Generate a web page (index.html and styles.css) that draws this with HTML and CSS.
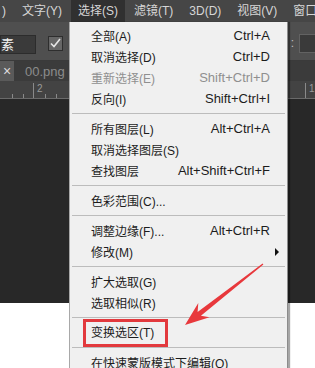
FILE: index.html
```html
<!DOCTYPE html>
<html lang="zh-CN">
<head>
    <meta charset="UTF-8">
    <meta name="viewport" content="width=device-width, initial-scale=1.0">
    <title>选择菜单</title>
    <link rel="stylesheet" href="styles.css">
</head>
<body>
    <div class="screen">
        <div class="menubar">
            <span class="menubar-item first">)</span>
            <span class="menubar-item">文字(Y)</span>
            <span class="menubar-item active">选择(S)</span>
            <span class="menubar-item">滤镜(T)</span>
            <span class="menubar-item">3D(D)</span>
            <span class="menubar-item">视图(V)</span>
            <span class="menubar-item">窗口</span>
        </div>

        <div class="options">
            <div class="options-left">
                <span class="field">素</span>
                <span class="checkbox">
                    <svg width="11" height="10" viewBox="0 0 11 10"><path d="M1 5.5 L4 8.5 L10 1" fill="none" stroke="#e6e6e6" stroke-width="1.6"/></svg>
                </span>
            </div>
            <div class="options-right">
                <span class="colon">:</span>
                <span class="field small"></span>
            </div>
        </div>

        <div class="tabs">
            <span class="tab-close">×</span>
            <span class="tab-title">00.png @</span>
        </div>

        <svg class="ruler" width="315" height="18" viewBox="0 0 315 18">
            <rect width="315" height="18" fill="#434343"/>
            <g stroke="#8a8a8a" stroke-width="1">
                <line x1="12.5" y1="13" x2="12.5" y2="18"/>
                <line x1="23.5" y1="13" x2="23.5" y2="18"/>
                <line x1="33.5" y1="2" x2="33.5" y2="18"/>
                <line x1="45.5" y1="13" x2="45.5" y2="18"/>
                <line x1="56.5" y1="13" x2="56.5" y2="18"/>
                <line x1="305.5" y1="2" x2="305.5" y2="18"/>
            </g>
            <text x="37" y="11" class="ruler-num">2</text>
            <text x="309" y="11" class="ruler-num">1</text>
            <line x1="0" y1="17.5" x2="315" y2="17.5" stroke="#6a6a6a"/>
        </svg>

        <div class="canvas"></div>
        <div class="paper"></div>

        <div class="dropdown">
            <div class="item"><span>全部(A)</span><span class="key">Ctrl+A</span></div>
            <div class="item"><span>取消选择(D)</span><span class="key">Ctrl+D</span></div>
            <div class="item disabled"><span>重新选择(E)</span><span class="key">Shift+Ctrl+D</span></div>
            <div class="item"><span>反向(I)</span><span class="key">Shift+Ctrl+I</span></div>
            <div class="sep"></div>
            <div class="item"><span>所有图层(L)</span><span class="key">Alt+Ctrl+A</span></div>
            <div class="item"><span>取消选择图层(S)</span></div>
            <div class="item"><span>查找图层</span><span class="key">Alt+Shift+Ctrl+F</span></div>
            <div class="sep"></div>
            <div class="item"><span>色彩范围(C)...</span></div>
            <div class="sep"></div>
            <div class="item"><span>调整边缘(F)...</span><span class="key">Alt+Ctrl+R</span></div>
            <div class="item"><span>修改(M)</span><span class="submenu"></span></div>
            <div class="sep"></div>
            <div class="item"><span>扩大选取(G)</span></div>
            <div class="item"><span>选取相似(R)</span></div>
            <div class="sep"></div>
            <div class="item"><span class="mark">变换选区(T)</span></div>
            <div class="sep"></div>
            <div class="item"><span>在快速蒙版模式下编辑(Q)</span></div>
        </div>

        <svg class="arrow" width="315" height="368" viewBox="0 0 315 368">
            <polygon fill="#e8383c" points="185,325 209.5,317.3 200.9,315.8 263.4,264.6 262.6,263.4 197.6,312 198.3,303.1"/>
        </svg>
    </div>
</body>
</html>
```

FILE: styles.css
```css
body {
    margin: 0;
    padding: 0;
    background: #fff;
    font-family: "Liberation Sans", "Noto Sans CJK SC", sans-serif;
}
.screen {
    position: relative;
    width: 315px;
    height: 368px;
    overflow: hidden;
    display: flex;
    flex-direction: column;
}

/* top menu bar */
.menubar {
    display: flex;
    height: 22px;
    background: #464646;
    flex-shrink: 0;
}
.menubar-item {
    padding: 0 7px;
    margin: 0 1px;
    line-height: 22px;
    font-size: 12px;
    color: #d6d6d6;
    white-space: nowrap;
}
.menubar-item.first { margin-left: -5px; }
.menubar-item.active { background: #303030; }

/* tool options bar */
.options {
    display: flex;
    justify-content: space-between;
    align-items: center;
    height: 38px;
    background: #4f4f4f;
    flex-shrink: 0;
    border-bottom: 1px solid #3a3a3a;
}
.options-left, .options-right {
    display: flex;
    align-items: center;
}
.field {
    width: 34px;
    height: 17px;
    background: #3a3a3a;
    border: 1px solid #2c2c2c;
    color: #f2f2f2;
    font-size: 13px;
    line-height: 17px;
    margin-top: 6px;
}
.field.small {
    width: 15px;
    border-color: #626262;
    border-right: none;
    margin-top: 4px;
}
.checkbox {
    display: flex;
    align-items: center;
    justify-content: center;
    width: 13px;
    height: 13px;
    margin: 4px 0 0 12px;
    background: #666;
    border: 1px solid #2e2e2e;
}
.colon {
    color: #bdbdbd;
    font-size: 12px;
    margin: 4px 5px 0 0;
}

/* document tabs */
.tabs {
    display: flex;
    align-items: center;
    height: 20px;
    background: #3b3b3b;
    flex-shrink: 0;
}
.tab-close {
    width: 14px;
    height: 20px;
    background: #5a5a5a;
    color: #dcdcdc;
    font-size: 14px;
    line-height: 20px;
    text-align: center;
}
.tab-title {
    margin-left: 11px;
    color: #8c8c8c;
    font-size: 13px;
}

.ruler {
    display: block;
    flex-shrink: 0;
}
.ruler-num {
    font-family: "Liberation Sans", sans-serif;
    font-size: 10px;
    fill: #9a9a9a;
}
.canvas {
    height: 204px;
    background: #282828;
    flex-shrink: 0;
}
.paper {
    flex: 1;
    background: #fff;
}

/* dropdown menu */
.dropdown {
    position: absolute;
    top: 22px;
    left: 69px;
    width: 217px;
    height: 360px;
    padding-top: 3px;
    background: #f0f0f0;
    border-left: 1px solid #a8a8a8;
    border-right: 1px solid #8c8c8c;
    box-shadow: 2px 0 1px rgba(0, 0, 0, 0.35);
}
.item {
    display: flex;
    justify-content: space-between;
    align-items: center;
    height: 21px;
    padding: 0 17px 0 21px;
    font-size: 12px;
    color: #1c1c1c;
    white-space: nowrap;
}
.item.disabled { color: #8f8f8f; }
.key { font-size: 13px; }
.submenu {
    width: 0;
    height: 0;
    margin-right: -9px;
    border-top: 4px solid transparent;
    border-bottom: 4px solid transparent;
    border-left: 4px solid #111;
}
.sep {
    height: 1px;
    margin: 4px 2px;
    background: #bcbcbc;
}
.mark {
    border: 3px solid #e2393d;
    padding: 2px 11px 2px 5px;
    margin-left: -8px;
    line-height: 18px;
}

.arrow {
    position: absolute;
    top: 0;
    left: 0;
}
```
